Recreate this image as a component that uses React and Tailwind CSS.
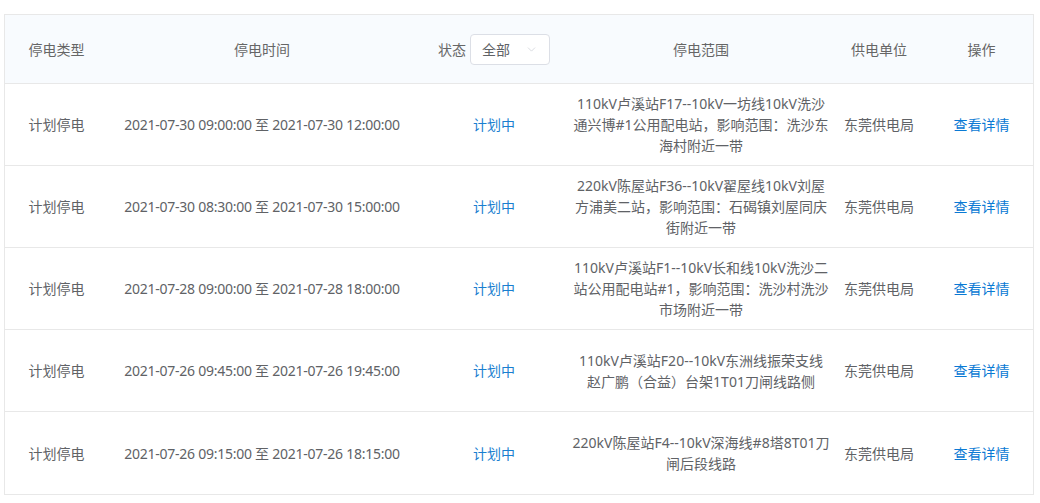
import { ChevronDown } from "lucide-react";

const rows = [
  {
    time: "2021-07-30 09:00:00 至 2021-07-30 12:00:00",
    scope: ["110kV卢溪站F17--10kV一坊线10kV洗沙", "通兴博#1公用配电站，影响范围：洗沙东", "海村附近一带"],
  },
  {
    time: "2021-07-30 08:30:00 至 2021-07-30 15:00:00",
    scope: ["220kV陈屋站F36--10kV翟屋线10kV刘屋", "方浦美二站，影响范围：石碣镇刘屋同庆", "街附近一带"],
  },
  {
    time: "2021-07-28 09:00:00 至 2021-07-28 18:00:00",
    scope: ["110kV卢溪站F1--10kV长和线10kV洗沙二", "站公用配电站#1，影响范围：洗沙村洗沙", "市场附近一带"],
  },
  {
    time: "2021-07-26 09:45:00 至 2021-07-26 19:45:00",
    scope: ["110kV卢溪站F20--10kV东洲线振荣支线", "赵广鹏（合益）台架1T01刀闸线路侧"],
  },
  {
    time: "2021-07-26 09:15:00 至 2021-07-26 18:15:00",
    scope: ["220kV陈屋站F4--10kV深海线#8塔8T01刀", "闸后段线路"],
  },
];

const cols = "grid grid-cols-[103px_308px_156px_258px_98px_107px]";

export default function App() {
  return (
    <div
      className="min-h-[503px] bg-white pt-[14px] pl-[4px] text-[14px] text-[#606266]"
      style={{ fontFamily: '"Noto Sans", "Noto Sans CJK SC", sans-serif' }}
    >
      <div className="w-[1030px] border border-[#e8e8e8]">
        {/* header */}
        <div className={`${cols} h-[69px] items-center border-b border-[#e8e8e8] bg-[#f8fbfe] text-center text-[#666]`}>
          <div>停电类型</div>
          <div>停电时间</div>
          <div className="flex items-center justify-center gap-[4px]">
            <span>状态</span>
            <div className="flex h-[31px] w-[80px] items-center justify-between rounded-[4px] border border-[#dcdfe6] bg-white pl-[11px] pr-[11px] text-[#606266]">
              <span>全部</span>
              <ChevronDown size={13} strokeWidth={1.1} className="text-[#c0c4cc]" />
            </div>
          </div>
          <div>停电范围</div>
          <div>供电单位</div>
          <div>操作</div>
        </div>
        {rows.map((r, i) => (
          <div
            key={i}
            className={`${cols} h-[82px] items-center text-center ${i < rows.length - 1 ? "border-b border-[#e8e8e8]" : ""}`}
          >
            <div>计划停电</div>
            <div className="tracking-[-0.25px]">{r.time}</div>
            <div className="text-[#1a7fd0]">计划中</div>
            <div className="leading-[21px]">
              {r.scope.map((l, j) => (
                <div key={j}>{l}</div>
              ))}
            </div>
            <div>东莞供电局</div>
            <div className="text-[#0a7ad4]">查看详情</div>
          </div>
        ))}
      </div>
    </div>
  );
}
